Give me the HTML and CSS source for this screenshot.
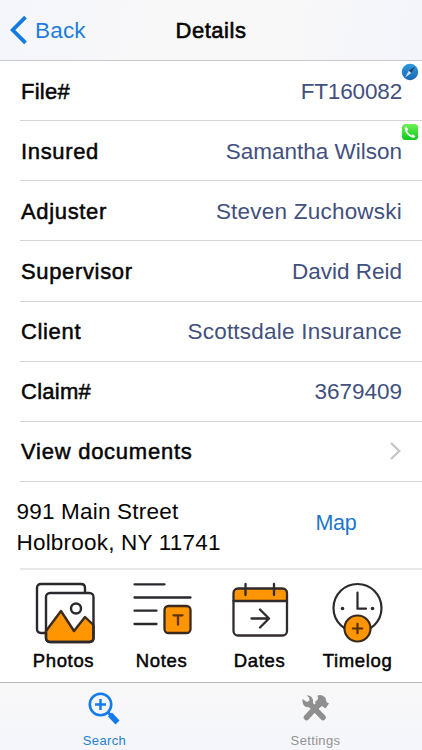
FILE: index.html
```html
<!DOCTYPE html>
<html lang="en">
<head>
<meta charset="utf-8">
<title>Details</title>
<link rel="stylesheet" href="styles.css">
</head>
<body>
<div class="screen">
  <header class="navbar">
    <a class="back"><svg width="18" height="30" viewBox="0 0 18 30"><path d="M16.500 2.200 3.700 15l12.800 12.800" fill="none" stroke="#1479e0" stroke-width="3.800"/></svg><span>Back</span></a>
    <h1>Details</h1>
  </header>

  <main>
    <div class="rows">
      <div class="row"><span class="label file">File#</span><span class="value file-number">FT160082</span>
        <svg class="badge" width="18" height="18" viewBox="0 0 18 18"><defs><linearGradient id="sea" x2="0" y2="1"><stop stop-color="#2d9be0"/><stop offset="1" stop-color="#1b66b5"/></linearGradient></defs><circle cx="9" cy="9" r="8.200" fill="url(#sea)"/><path d="M14.300 3 10.300 10 7.800 7.800z" fill="#30445b"/><path d="M4 14.500 7.800 7.800l2.500 2.200z" fill="#c5e2f0"/></svg>
      </div>
      <div class="row"><span class="label">Insured</span><span class="value samantha">Samantha Wilson</span>
        <svg class="badge" width="18" height="18" viewBox="0 0 18 18"><defs><linearGradient id="leaf" x2="0" y2="1"><stop stop-color="#6bf354"/><stop offset="1" stop-color="#0cc91b"/></linearGradient></defs><rect x="1" y="1" width="16" height="16" rx="3.500" fill="url(#leaf)"/><path d="M5.300 3.600c-1.500.7-1.800 2-1.200 3.900 1 3 3.700 5.900 6.700 7 1.700.6 2.900.2 3.600-1.200L11.800 11.200l-1.500 1.200C8.500 11.500 7 9.800 6.100 8l1.100-1.500z" fill="#fff"/></svg>
      </div>
      <div class="row"><span class="label">Adjuster</span><span class="value">Steven Zuchowski</span></div>
      <div class="row"><span class="label">Supervisor</span><span class="value david">David Reid</span></div>
      <div class="row"><span class="label">Client</span><span class="value">Scottsdale Insurance</span></div>
      <div class="row"><span class="label file">Claim#</span><span class="value claim-number">3679409</span></div>
      <div class="row"><span class="label documents">View documents</span><svg class="chevron" width="13" height="20" viewBox="0 0 13 20"><path d="m2 2 8.300 8L2 18" fill="none" stroke="#c5c5ca" stroke-width="2.300"/></svg></div>
    </div>

    <section class="address">
      <p>991 Main Street<br>Holbrook, NY 11741</p>
      <a class="map">Map</a>
    </section>

    <section class="actions">
      <div class="action photos">
        <svg width="62" height="66" viewBox="0 0 62 66"><g fill="none" stroke="#2c292e" stroke-width="2.400" stroke-linejoin="round"><path d="M12 54H8q-4 0-4-4V9q0-4 4-4h40q4 0 4 4v5"/><path fill="#ff9500" stroke="#3a2a1d" d="m13 52 15-20 13 20 11-14 8.500 8v13q0 4-4 4H17q-4 0-4-4z"/><rect x="13" y="14" width="47.500" height="49" rx="4"/><circle cx="43" cy="29.500" r="5"/></g></svg>
        <span>Photos</span>
      </div>
      <div class="action notes">
        <svg width="62" height="66" viewBox="0 0 62 66"><g fill="none" stroke="#29282f" stroke-width="2.300" stroke-linecap="round"><path d="M3.500 5.300h30M3.500 18.500h56M3.500 31.700h22M3.500 45h22"/><rect x="33.500" y="27" width="26" height="27" rx="4" fill="#ff9500" stroke="#3a2a1d"/><path d="M42.500 36.300h9M47 36.300v9.400" stroke="#5d340b"/></g></svg>
        <span>Notes</span>
      </div>
      <div class="action dates">
        <svg width="62" height="66" viewBox="0 0 62 66"><path d="M4.500 22V13q0-4 4-4h46q4 0 4 4v9z" fill="#ff9500"/><g fill="none" stroke="#302b2c" stroke-width="2.300" stroke-linecap="round" stroke-linejoin="round"><rect x="4.500" y="9.500" width="53.500" height="47" rx="4.500"/><path d="M4.500 22h53.500M16.500 5v11M45 5v11M22.500 39.500h17M31 30.500l9 9-9 9"/></g></svg>
        <span>Dates</span>
      </div>
      <div class="action timelog">
        <svg width="62" height="66" viewBox="0 0 62 66"><g fill="none" stroke="#2b292e" stroke-width="2.200" stroke-linecap="round"><circle cx="30.500" cy="29" r="24"/><path d="M30.500 13.500v16.200h8.500"/><circle cx="15.500" cy="29.500" r="1.800" fill="#2b292e" stroke="none"/><circle cx="45.500" cy="29.500" r="1.800" fill="#2b292e" stroke="none"/><circle cx="30.500" cy="49.500" r="13" fill="#ff9500" stroke="#3a2a1d"/><path d="M25.800 49.500h9.400M30.500 44.800v9.400" stroke="#573009"/></g></svg>
        <span>Timelog</span>
      </div>
    </section>
  </main>

  <nav class="tabs">
    <a class="tab active"><svg width="34" height="36" viewBox="0 0 34 36"><g fill="none" stroke="#147bed"><circle cx="13.500" cy="13.500" r="10.700" stroke-width="2.600"/><path d="M8 13.500h11M13.500 8v11" stroke-width="2.500"/><path d="m20.500 21 4 4" stroke-width="3"/><path d="m23 23.500 7.500 8" stroke-width="5.500"/></g></svg><span>Search</span></a>
    <a class="tab"><svg width="34" height="36" viewBox="0 0 34 36"><g fill="none" stroke="#8f8f8f" stroke-linecap="round"><path d="m12 13 13 13.500" stroke-width="5.600"/><path d="M8.500 26.500 21 13" stroke-width="5.600"/></g><path d="M8.500 4.500c4-.5 7 2 6.500 6.500l-3 5c-5 1-8-2-7.500-8l4.500 3 2.500-1.500-.500-3z" fill="#8f8f8f"/><path d="m17 11 3-3-.500-3.500q5-1.500 8 2.500l1 4 2.500 1.500-3.500 5-3.500-2.500-4 3z" fill="#8f8f8f"/></svg><span>Settings</span></a>
  </nav>
</div>
</body>
</html>
```
FILE: styles.css
```css
* { box-sizing: border-box; }
body { margin: 0; background: #fff; font-family: "Liberation Sans", Arial, sans-serif; color: #050505; }
.screen { width: 422px; height: 750px; display: flex; flex-direction: column; }
svg { display: block; flex: none; }

.navbar { height: 61px; flex: none; display: grid; grid-template-columns: 1fr auto 1fr; align-items: center; padding-left: 9px; background: linear-gradient(100deg, #f5f6fc, #f8f8f8 40%, #f8f8f8 65%, #f4f5fb); border-bottom: 1px solid #c7c7ca; }
.back { display: flex; align-items: center; gap: 8px; color: #1c7ddb; font-size: 22.500px; letter-spacing: .2px; }
.back span { padding-top: 1px; }
h1 { margin: 1px 9px 0 0; font-size: 22px; line-height: 30px; font-weight: 400; letter-spacing: .55px; -webkit-text-stroke: .6px #050505; }

main { flex: 1; display: flex; flex-direction: column; }
.rows { height: 421px; display: grid; grid-template-rows: repeat(7, 1fr); margin-left: 20px; }
.row { position: relative; display: flex; justify-content: space-between; align-items: center; border-bottom: 1px solid #d5d5d7; padding-right: 20px; }
.label { padding: 2px 0 0 1px; font-size: 22px; letter-spacing: .65px; -webkit-text-stroke: .5px #050505; }
.file { letter-spacing: .25px; }
.documents { letter-spacing: .75px; }
.value { padding-top: 2px; font-size: 22.500px; letter-spacing: .22px; color: #42507e; }
.file-number { letter-spacing: -.15px; }
.samantha { letter-spacing: 0; }
.david { letter-spacing: 0; }
.claim-number { letter-spacing: 0; }
.badge { position: absolute; right: 3px; top: 2px; }

.address { height: 88px; display: flex; align-items: center; margin-left: 20px; border-bottom: 2px solid #e7e7e7; }
.address p { width: 299px; margin: 4px 0 0 -3.500px; font-size: 22.500px; line-height: 31.500px; letter-spacing: .2px; }
.map { color: #1b77cb; font-size: 21.500px; letter-spacing: -.3px; margin-top: -3px; }

.actions { display: grid; grid-template-columns: repeat(4, 98px); padding: 9px 0 0 14.500px; }
.action { display: flex; flex-direction: column; align-items: center; gap: 5px; font-size: 18.500px; line-height: 22px; letter-spacing: .65px; -webkit-text-stroke: .5px #050505; }

.tabs { height: 68px; flex: none; display: grid; grid-template-columns: 1fr 1fr; background: linear-gradient(#f8f8f8, #f5f6fb); border-top: 1px solid #b9b9bb; }
.tab { display: flex; flex-direction: column; align-items: center; padding: 8px 2px 0 0; font-size: 13px; line-height: 16px; letter-spacing: .35px; color: #929292; gap: 6px; }
.tab svg { margin-right: 1px; }
.active { color: #2680cf; }
```
